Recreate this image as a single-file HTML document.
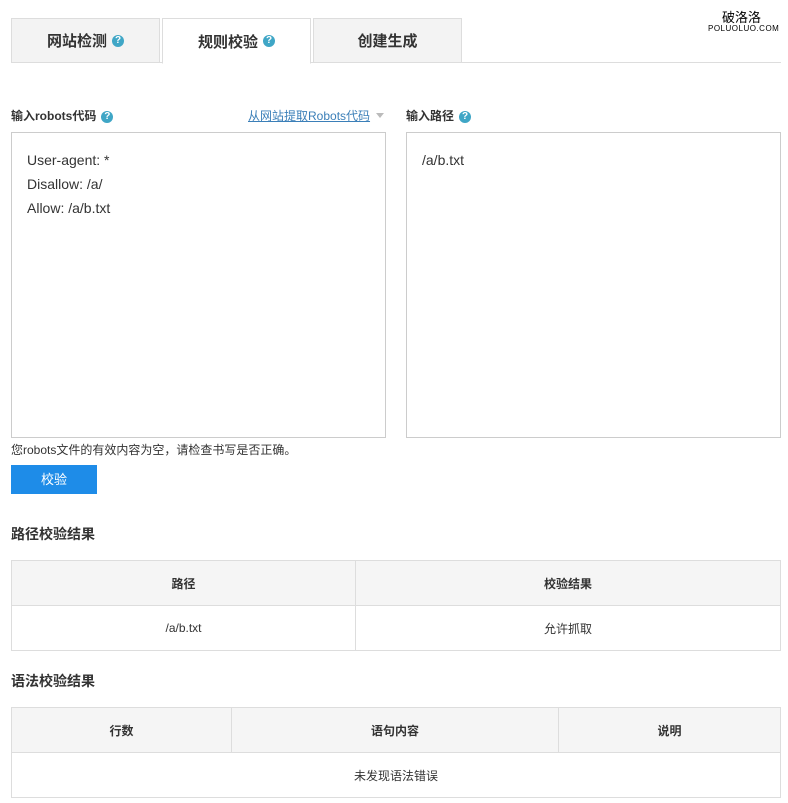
<!DOCTYPE html>
<html><head><meta charset="utf-8"><style>
*{margin:0;padding:0;box-sizing:border-box}
body{width:788px;height:803px;background:#fff;font-family:"Liberation Sans","Noto Sans CJK SC",sans-serif;color:#333;position:relative;overflow:hidden;font-size:12px}
.a{position:absolute}
.tab{position:absolute;top:18px;height:45px;background:#f3f3f3;border:1px solid #ddd;font-size:15px;font-weight:bold;color:#333;display:flex;align-items:center;justify-content:center}
.q{display:inline-block;width:12px;height:12px;border-radius:50%;background:#3fa6c6;color:#fff;font-size:10px;line-height:12px;text-align:center;font-weight:bold;margin-left:5px;vertical-align:middle}
.box{position:absolute;border:1px solid #ccc;background:#fff;font-size:14px;line-height:24px;color:#333;padding:15px}
table{position:absolute;left:11px;width:770px;border-collapse:collapse;font-size:12px}
td,th{border:1px solid #ddd;height:45px;text-align:center}
th{background:#f5f5f5;font-weight:bold}
.h{position:absolute;left:11px;font-size:14px;font-weight:bold;color:#333}
</style></head><body>
<div class="a" style="left:11px;top:62px;width:770px;border-top:1px solid #ddd"></div>
<div class="tab" style="left:11px;width:149px">网站检测<span class="q">?</span></div>
<div class="tab" style="left:162px;width:149px;background:#fff;border-bottom-color:#fff;height:46px">规则校验<span class="q">?</span></div>
<div class="tab" style="left:313px;width:149px">创建生成</div>
<div class="a" style="left:722px;top:7px;font-size:13px;color:#000">破洛洛</div>
<div class="a" style="left:708px;top:24px;font-size:8px;color:#000;letter-spacing:.5px">POLUOLUO.COM</div>
<div class="a" style="left:11px;top:107px;font-size:12px;font-weight:bold">输入robots代码<span class="q">?</span></div>
<div class="a" style="left:248px;top:107px;font-size:12px;color:#3b7fb8;text-decoration:underline">从网站提取Robots代码</div>
<div class="a" style="left:376px;top:113px;border:4px solid transparent;border-top:5px solid #bbb"></div>
<div class="a" style="left:406px;top:107px;font-size:12px;font-weight:bold">输入路径<span class="q">?</span></div>
<div class="box" style="left:11px;top:132px;width:375px;height:306px">User-agent: *<br>Disallow: /a/<br>Allow: /a/b.txt</div>
<div class="box" style="left:406px;top:132px;width:375px;height:306px">/a/b.txt</div>
<div class="a" style="left:11px;top:441px;font-size:12px">您robots文件的有效内容为空，请检查书写是否正确。</div>
<div class="a" style="left:11px;top:465px;width:86px;height:29px;background:#1e8ce8;color:#fff;font-size:13px;text-align:center;line-height:29px">校验</div>
<div class="h" style="top:524px">路径校验结果</div>
<table style="top:560px"><tr><th style="width:344px">路径</th><th>校验结果</th></tr><tr><td>/a/b.txt</td><td>允许抓取</td></tr></table>
<div class="h" style="top:671px">语法校验结果</div>
<table style="top:707px"><tr><th style="width:220px">行数</th><th style="width:327px">语句内容</th><th>说明</th></tr><tr><td colspan="3">未发现语法错误</td></tr></table>
</body></html>
